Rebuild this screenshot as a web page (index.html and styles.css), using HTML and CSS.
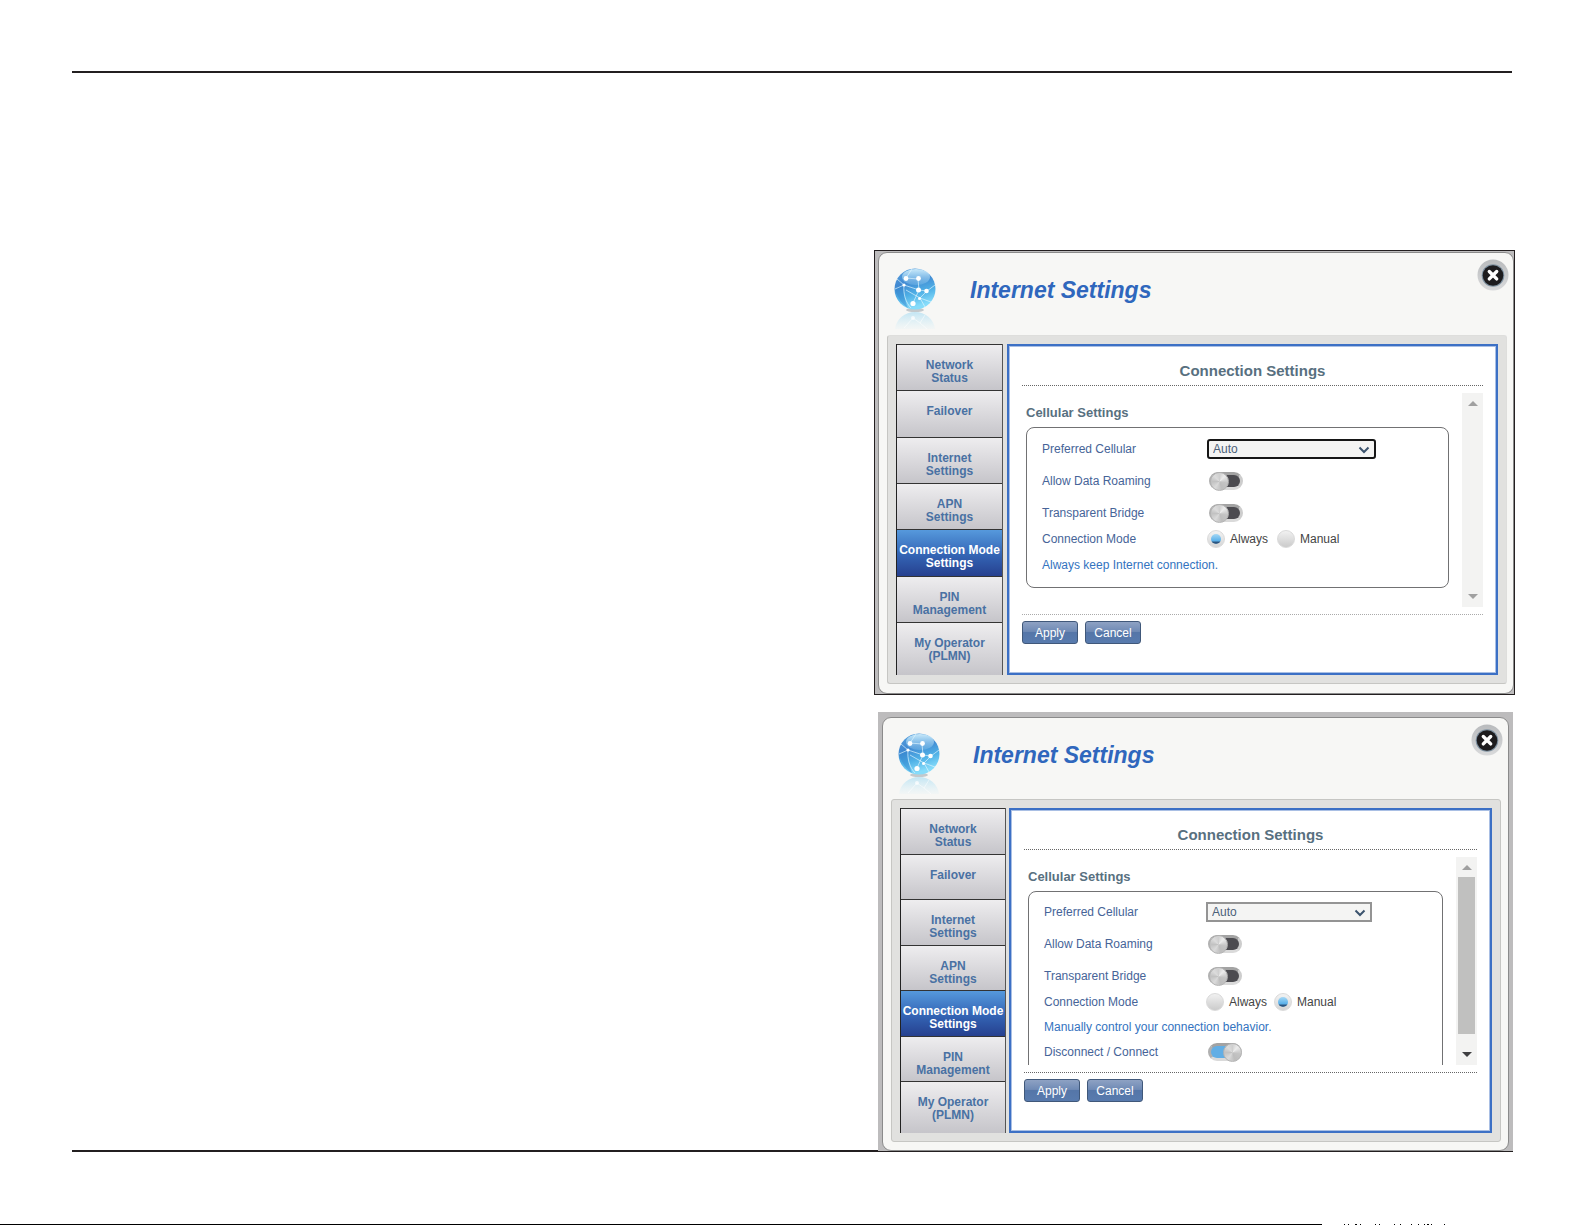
FILE: index.html
```html
<!DOCTYPE html>
<html lang="en">
<head>
<meta charset="utf-8">
<title>Internet Settings</title>
<link rel="stylesheet" href="styles.css">
</head>
<body>
<svg class="defs" width="0" height="0" aria-hidden="true">
  <defs>
    <linearGradient id="sea" x1="0" y1="0" x2="0.3" y2="1">
      <stop offset="0" stop-color="#5ba4de"/><stop offset="0.4" stop-color="#4189d2"/><stop offset="0.7" stop-color="#4fb0e6"/><stop offset="1" stop-color="#86dcfa"/>
    </linearGradient>
    <linearGradient id="shine" x1="0" y1="0" x2="0" y2="1">
      <stop offset="0" stop-color="#c9e9fa"/><stop offset="1" stop-color="#8ecbf0" stop-opacity="0.3"/>
    </linearGradient>
    <linearGradient id="fade" x1="0" y1="0" x2="0" y2="1">
      <stop offset="0" stop-color="#9fd9f2" stop-opacity="0.6"/><stop offset="1" stop-color="#c9ebf8" stop-opacity="0.1"/>
    </linearGradient>
    <symbol id="globe" viewBox="0 0 42 63">
      <ellipse cx="21" cy="42" rx="9" ry="2" fill="#c4c9cc"/>
      <circle cx="21" cy="21" r="20.5" fill="url(#sea)"/>
      <path d="M1 22C5 32 9 37 14 40C10 31 9 23 10 17C7 16 4 18 1 22Z" fill="#2f7fcb" opacity="0.4"/>
      <ellipse cx="22" cy="9" rx="14" ry="8" fill="url(#shine)"/>
      <g fill="none" stroke="#dff4fd" stroke-width="0.9" stroke-opacity="0.75">
        <path d="M3 11L10 17M12 10L24 11M24 11L25 22L33 23L41 17M10 17L25 22M33 23L26 30L37 34M10 17C9 26 12 35 17 40M25 22L19 35M26 30L12 22M12 10L18 1M26 30L31 39M1 21L10 17"/>
      </g>
      <g fill="#fff"><circle cx="12" cy="10.5" r="2.4"/><circle cx="24.5" cy="10.5" r="2.4"/><circle cx="10" cy="17" r="1.6"/><circle cx="24.500" cy="22" r="2.5"/><circle cx="32.500" cy="23" r="2.3"/><circle cx="25.500" cy="30.500" r="1.5"/><circle cx="19" cy="35.500" r="2.6"/></g>
      <path d="M1 61C2 51 11 44 21 44C31 44 40 51 41 61Z" fill="url(#fade)"/>
      <g fill="none" stroke="#fff" stroke-opacity="0.5"><path d="M10 60L19 50L26 55L33 61M26 55L31 47"/></g>
      <circle cx="19" cy="50" r="2" fill="#fff" fill-opacity="0.7"/>
    </symbol>
    <linearGradient id="ring" x1="0" y1="0" x2="0" y2="1"><stop offset="0" stop-color="#b9bbbd"/><stop offset="1" stop-color="#d9dadb"/></linearGradient>
    <symbol id="close" viewBox="0 0 32 32">
      <circle cx="16" cy="16" r="15.500" fill="url(#ring)"/>
      <circle cx="16" cy="16.500" r="11.300" fill="#7e91a0"/>
      <circle cx="16" cy="16.500" r="10.300" fill="#1d1c1e"/>
      <path d="M12.300 12.500L19.700 19.900M19.700 12.500L12.300 19.900" stroke="#fff" stroke-width="3.400" stroke-linecap="round"/>
    </symbol>
    <symbol id="chevron" viewBox="0 0 12 8"><path d="M1.500 1.500L6 6L10.500 1.500" fill="none" stroke="#3c546e" stroke-width="2"/></symbol>
  </defs>
</svg>

<main class="sheet">
  <div class="figures">

    <section class="panel outlined" aria-label="Internet Settings, always connected">
      <div class="frame">
        <header class="head">
          <svg class="globe" aria-hidden="true"><use href="#globe"/></svg>
          <h2 class="title">Internet Settings</h2>
          <button class="close" type="button" aria-label="Close"><svg><use href="#close"/></svg></button>
        </header>
        <div class="well">
          <nav class="tabs">
            <button class="tab" type="button">Network<br>Status</button>
            <button class="tab" type="button">Failover</button>
            <button class="tab" type="button">Internet<br>Settings</button>
            <button class="tab" type="button">APN<br>Settings</button>
            <button class="tab active" type="button">Connection Mode<br>Settings</button>
            <button class="tab" type="button">PIN<br>Management</button>
            <button class="tab" type="button">My Operator<br>(PLMN)</button>
          </nav>
          <form class="content">
            <h3 class="heading">Connection Settings</h3>
            <div class="scroller">
              <div class="view">
                <h4 class="subheading">Cellular Settings</h4>
                <div class="box">
                  <div class="row"><label for="cell-a">Preferred Cellular</label>
                    <span class="picker"><select id="cell-a" class="focused"><option>Auto</option></select><svg><use href="#chevron"/></svg></span></div>
                  <div class="row"><label for="roam-a">Allow Data Roaming</label><input class="toggle" id="roam-a" type="checkbox"></div>
                  <div class="row"><label for="bridge-a">Transparent Bridge</label><input class="toggle" id="bridge-a" type="checkbox"></div>
                  <div class="row short"><span class="name">Connection Mode</span>
                    <label class="choice"><input class="radio" type="radio" name="mode-a" checked>Always</label>
                    <label class="choice"><input class="radio" type="radio" name="mode-a">Manual</label></div>
                  <p class="row note">Always keep Internet connection.</p>
                </div>
              </div>
              <div class="bar"><i class="arrow up"></i><i class="arrow down"></i></div>
            </div>
            <div class="actions faint"><button class="action" type="button">Apply</button><button class="action" type="button">Cancel</button></div>
          </form>
        </div>
      </div>
    </section>

    <section class="panel shaded" aria-label="Internet Settings, manual connection">
      <div class="frame">
        <header class="head">
          <svg class="globe" aria-hidden="true"><use href="#globe"/></svg>
          <h2 class="title">Internet Settings</h2>
          <button class="close" type="button" aria-label="Close"><svg><use href="#close"/></svg></button>
        </header>
        <div class="well">
          <nav class="tabs">
            <button class="tab" type="button">Network<br>Status</button>
            <button class="tab" type="button">Failover</button>
            <button class="tab" type="button">Internet<br>Settings</button>
            <button class="tab" type="button">APN<br>Settings</button>
            <button class="tab active" type="button">Connection Mode<br>Settings</button>
            <button class="tab" type="button">PIN<br>Management</button>
            <button class="tab" type="button">My Operator<br>(PLMN)</button>
          </nav>
          <form class="content">
            <h3 class="heading">Connection Settings</h3>
            <div class="scroller">
              <div class="view">
                <h4 class="subheading">Cellular Settings</h4>
                <div class="box open">
                  <div class="row"><label for="cell-b">Preferred Cellular</label>
                    <span class="picker"><select id="cell-b"><option>Auto</option></select><svg><use href="#chevron"/></svg></span></div>
                  <div class="row"><label for="roam-b">Allow Data Roaming</label><input class="toggle" id="roam-b" type="checkbox"></div>
                  <div class="row"><label for="bridge-b">Transparent Bridge</label><input class="toggle" id="bridge-b" type="checkbox"></div>
                  <div class="row short"><span class="name">Connection Mode</span>
                    <label class="choice"><input class="radio" type="radio" name="mode-b">Always</label>
                    <label class="choice"><input class="radio" type="radio" name="mode-b" checked>Manual</label></div>
                  <p class="row note">Manually control your connection behavior.</p>
                  <div class="row short"><label for="link-b">Disconnect / Connect</label><input class="toggle" id="link-b" type="checkbox" checked></div>
                </div>
              </div>
              <div class="bar live"><i class="arrow up"></i><i class="thumb"></i><i class="arrow down"></i></div>
            </div>
            <div class="actions"><button class="action" type="button">Apply</button><button class="action" type="button">Cancel</button></div>
          </form>
        </div>
      </div>
    </section>

  </div>
</main>
<footer class="edge" aria-hidden="true">
  <div class="edge-line"></div>
  <svg class="edge-marks" width="104" height="1" viewBox="0 0 104 1" shape-rendering="crispEdges"><path d="M0 0h1v1h-1zM4 0h1v1h-1zM11 0h2v1h-2zM16 0h1v1h-1zM31 0h1v1h-1zM35 0h1v1h-1zM50 0h1v1h-1zM56 0h1v1h-1zM67 0h1v1h-1zM74 0h1v1h-1zM80 0h1v1h-1zM83 0h2v1h-2zM87 0h1v1h-1zM100 0h1v1h-1z"/></svg>
</footer>
</body>
</html>
```
FILE: styles.css
```css
* { box-sizing: border-box; }

body {
  margin: 0;
  min-height: 100vh;
  display: flex;
  flex-direction: column;
  background: #fff;
  font-family: "Liberation Sans", Arial, sans-serif;
  font-size: 12px;
}

h2, h3, h4, p { margin: 0; }
button, select, input { margin: 0; font-family: inherit; }
.defs { position: absolute; }

/* Page rules above and below the figures */
.sheet { padding: 71px 70px 0 72px; }
.sheet::before,
.sheet::after {
  content: "";
  display: block;
  height: 2px;
  margin-right: 3px;
  background: #231f20;
}
.sheet::after { margin-top: -2px; }

.figures {
  position: relative;
  z-index: 1;
  display: flex;
  flex-direction: column;
  align-items: flex-end;
  gap: 17px;
  padding-top: 177px;
}

.panel { width: 100%; background: #bdbcbd; }
.outlined {
  --well: 331px;
  --name: 165px;
  --tabs: 107px;
  --gap: 4px;
  --picker: 169px;
  --choice-gap: 9px;
  max-width: 641px;
  padding: 1px 0 0 3px;
  border: 1px solid #231f20;
}
.shaded {
  --well: 325px;
  --name: 162px;
  --tabs: 106px;
  --gap: 3px;
  --picker: 166px;
  --choice-gap: 7px;
  max-width: 635px;
  margin-right: 2px;
  padding: 5px 4px 0 4px;
  border-bottom: 1px solid #231f20;
}

.frame {
  padding: 0 6px 9px 8px;
  border: 1px solid #8b8b8b;
  border-radius: 9px;
  background: #f7f7f5;
}
.shaded .frame { padding: 0 7px 8px 8px; }

.head {
  display: flex;
  align-items: flex-start;
  height: 82px;
  padding: 15px 0 0 7px;
}
.shaded .head { height: 81px; }
.globe { flex: none; width: 42px; height: 63px; }
.title {
  margin: 8px auto 0 34px;
  color: #2f67bd;
  font-size: 23px;
  line-height: 28px;
  font-style: italic;
}
.shaded .title { margin-left: 33px; }
.close {
  width: 32px;
  height: 32px;
  margin: -9px -2px 0 0;
  padding: 0;
  border: 0;
  background: none;
}
.close svg { display: block; width: 32px; height: 32px; }

.well {
  display: grid;
  grid-template-columns: var(--tabs) minmax(0, 1fr);
  gap: var(--gap);
  min-height: calc(var(--well) + 18px);
  padding: 8px;
  border: 1px solid #c6c6c3;
  border-radius: 3px;
  background: #e1e1df;
}
.outlined .well { border-top-color: #dededc; border-right-color: #dededc; }

.tabs {
  display: grid;
  grid-template-rows: repeat(6, 7fr) 8fr;
  border: solid #555;
  border-width: 0 1px;
  border-left-color: #222;
}
.tab {
  display: flex;
  flex-direction: column;
  align-items: center;
  justify-content: flex-start;
  padding: 14px 0 0;
  border: 0;
  border-top: 1px solid #333;
  background: linear-gradient(#eeedef, #c6c5ca);
  color: #4971a3;
  font-size: 12px;
  font-weight: bold;
  line-height: 13px;
  text-align: center;
  white-space: nowrap;
}
.tab.active {
  background: linear-gradient(#5699dc, #3568b8 50%, #26408f);
  color: #fff;
}

.content {
  display: flex;
  flex-direction: column;
  padding: 14px 12px 28px 12px;
  border: 3px solid #3c70c5;
  outline: 1px solid #a9bfe4;
  outline-offset: -3px;
  background: #fff;
}
.heading {
  padding-bottom: 4px;
  border-bottom: 1px dotted #666;
  color: #58707f;
  font-size: 15px;
  line-height: 20px;
  text-align: center;
}
.scroller {
  flex: 1;
  display: grid;
  grid-template-columns: minmax(0, 1fr) 21px;
  gap: 13px;
  min-height: 0;
  margin: 7px 0;
}
.view { height: 0; min-height: 100%; padding: 11px 0 0 4px; overflow: hidden; }
.subheading {
  margin-bottom: 5px;
  color: #58707f;
  font-size: 13px;
  line-height: 18px;
}
.box {
  padding: 5px 15px 6px;
  border: 1px solid #717173;
  border-radius: 8px;
}
.box.open { padding: 4px 15px 32px; }

.row {
  display: flex;
  align-items: center;
  height: 32px;
  color: #466498;
  white-space: nowrap;
}
.row.short { height: 20px; }
.row.note { color: #3373c0; }
.open .note { height: 30px; }
.row > label:first-child,
.name { flex: 0 0 var(--name); }

.picker { position: relative; flex: 0 0 var(--picker); }
.picker select {
  display: block;
  width: 100%;
  height: 20px;
  padding: 0 4px;
  appearance: none;
  border: 2px solid #949494;
  border-radius: 0;
  background: #f4f4f3;
  color: #4b6078;
  font-size: 12px;
}
.picker .focused { border-color: #161616; border-radius: 3px; }
.picker svg {
  position: absolute;
  top: 7px;
  right: 6px;
  width: 12px;
  height: 8px;
  pointer-events: none;
}

.toggle {
  display: flex;
  align-items: center;
  width: 34px;
  height: 18px;
  margin-left: 2px;
  appearance: none;
  border: 3px solid;
  border-color: #a3a3a3 #cdcdcd #dadada #b0b0b0;
  border-radius: 9px;
  background: #4c4b50;
}
.toggle::before {
  content: "";
  flex: none;
  width: 17px;
  height: 17px;
  margin-left: -2px;
  border: 1px solid #b4b4b4;
  border-radius: 50%;
  background: conic-gradient(#cfcfcf, #ececec 12%, #c4c4c4 28%, #bdbdbd 45%, #dadada 60%, #c2c2c2 75%, #dcdcdc 88%, #cfcfcf);
}
.toggle:checked { justify-content: flex-end; background: #62aee5; }
.toggle:checked::before { margin: 0 -3px 0 0; }

.choice {
  display: flex;
  align-items: center;
  gap: 5px;
  margin-right: var(--choice-gap);
  color: #444;
}
.radio {
  width: 18px;
  height: 18px;
  appearance: none;
  border: 1px solid #dadada;
  border-radius: 50%;
  background: linear-gradient(#f1f1f1, #cbcbcb);
}
.radio:checked { display: grid; place-items: center; background: linear-gradient(#f3f3f3, #d5d5d5); }
.radio:checked::before {
  content: "";
  width: 10px;
  height: 10px;
  border-radius: 50%;
  background: linear-gradient(#a6d8f5, #5db2ea 65%, #2b5580 85%, #3d6b94);
}

.bar {
  display: flex;
  flex-direction: column;
  align-items: center;
  justify-content: space-between;
  padding: 8px 0;
  background: #f3f3f2;
}
.arrow { border: 5px solid transparent; }
.arrow.up { border-top: 0; border-bottom-color: #a0a0a0; }
.arrow.down { border-bottom: 0; border-top-color: #a0a0a0; }
.live .arrow.down { border-top-color: #3f3f41; }
.thumb {
  flex: 1;
  width: 17px;
  margin: 7px 0 18px;
  background: #c0c0bf;
}

.actions {
  display: flex;
  gap: 7px;
  padding-top: 6px;
  border-top: 1px dotted #666;
}
.actions.faint { border-top-color: #aaa; }
.action {
  width: 56px;
  height: 23px;
  padding: 0;
  border: 1px solid #40587a;
  border-radius: 3px;
  background: linear-gradient(#8ea2c3, #6f8ab5 45%, #5576a8 50%, #587bae);
  color: #fff;
  font-size: 12px;
}

/* Top edge of the following page */
.edge { display: flex; margin-top: auto; height: 1px; }
.edge-line { width: 83.4%; background: #000; }
.edge-marks { margin-left: 22px; }
```
